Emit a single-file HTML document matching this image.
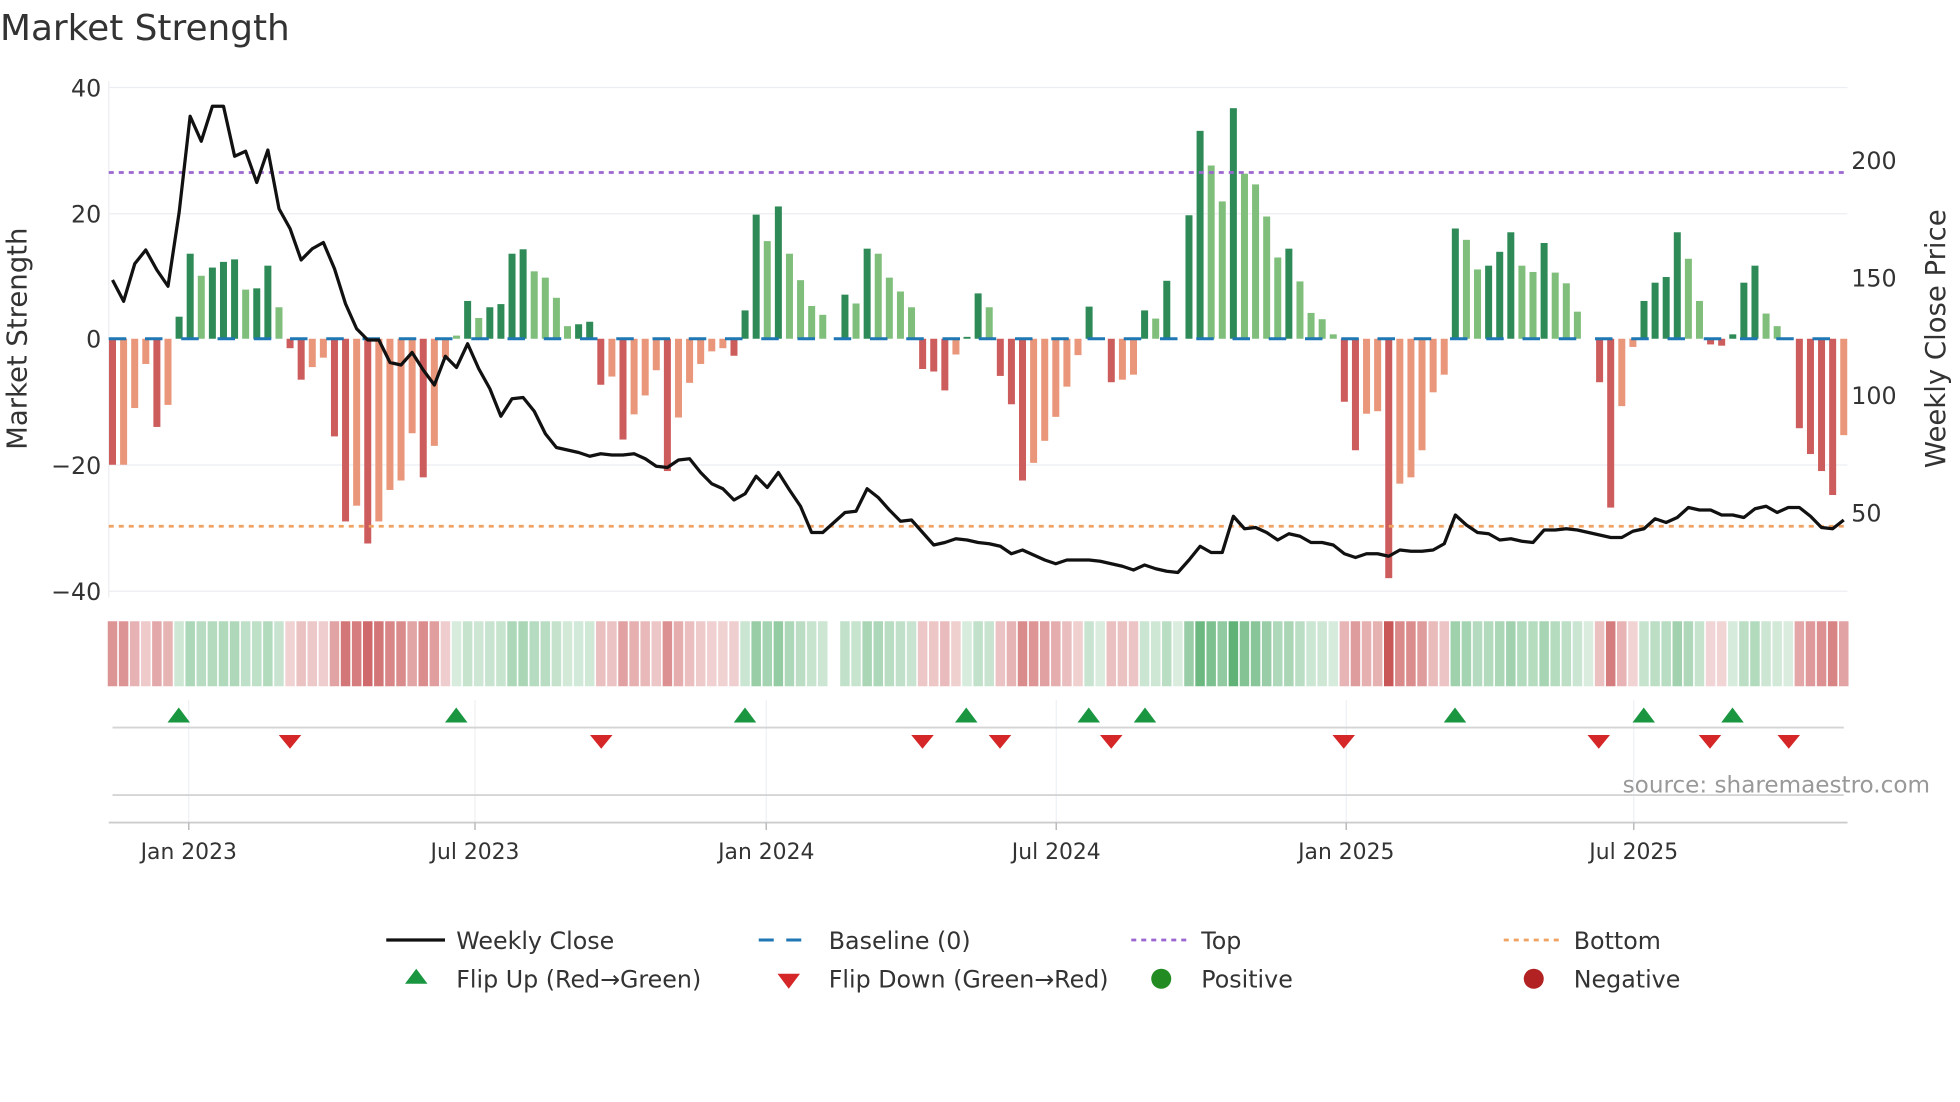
<!DOCTYPE html>
<html><head><meta charset="utf-8"><style>
html,body{margin:0;padding:0;background:#fff;width:1960px;height:1102px;overflow:hidden}
svg{display:block}
text{font-family:"DejaVu Sans","Liberation Sans",sans-serif;fill:#333}
</style></head><body>
<svg id="s" width="1960" height="1102" viewBox="0 0 1568 881.6" xmlns="http://www.w3.org/2000/svg">
<text x="0" y="32" font-size="28.7" fill="#333">Market Strength</text>
<g stroke="#eceef2" stroke-width="1">
<line x1="87" y1="70" x2="1478" y2="70"/><line x1="87" y1="171" x2="1478" y2="171"/>
<line x1="87" y1="372" x2="1478" y2="372"/><line x1="87" y1="473" x2="1478" y2="473"/>
<line x1="87" y1="65" x2="87" y2="478"/>
</g>
<g font-size="19" text-anchor="end">
<text x="81" y="77">40</text><text x="81" y="178">20</text><text x="81" y="278">0</text>
<text x="81" y="379">−20</text><text x="81" y="480">−40</text>
</g>
<g font-size="19">
<text x="1481" y="135">200</text><text x="1481" y="229">150</text><text x="1481" y="323">100</text><text x="1481" y="417">50</text>
</g>
<text transform="translate(21,271) rotate(-90)" font-size="22" text-anchor="middle">Market Strength</text>
<text transform="translate(1556,271) rotate(-90)" font-size="22" text-anchor="middle">Weekly Close Price</text>
<g id="bars"></g>
<line x1="87" y1="271" x2="1478" y2="271" stroke="#1f77b4" stroke-width="2.4" stroke-dasharray="14 15"/>
<line x1="87" y1="138" x2="1478" y2="138" stroke="#9b66d0" stroke-width="2.2" stroke-dasharray="4 4"/>
<line x1="87" y1="421" x2="1478" y2="421" stroke="#f0a262" stroke-width="2.2" stroke-dasharray="4 4"/>
<polyline id="price" fill="none" stroke="#111" stroke-width="2.6" stroke-linejoin="round"/>
<g id="strip"></g>
<g stroke="#edf0f4" stroke-width="1">
<line x1="151" y1="560" x2="151" y2="658"/><line x1="380" y1="560" x2="380" y2="658"/>
<line x1="613" y1="560" x2="613" y2="658"/><line x1="845" y1="560" x2="845" y2="658"/>
<line x1="1077" y1="560" x2="1077" y2="658"/><line x1="1307" y1="560" x2="1307" y2="658"/>
</g>
<line x1="90" y1="582" x2="1475" y2="582" stroke="#d4d4d4" stroke-width="1.5"/>
<line x1="90" y1="636" x2="1475" y2="636" stroke="#d4d4d4" stroke-width="1.5"/>
<line x1="87" y1="658" x2="1478" y2="658" stroke="#ccc" stroke-width="1.5"/>
<g stroke="#bbb" stroke-width="1.2">
<line x1="151" y1="658" x2="151" y2="664"/><line x1="380" y1="658" x2="380" y2="664"/>
<line x1="613" y1="658" x2="613" y2="664"/><line x1="845" y1="658" x2="845" y2="664"/>
<line x1="1077" y1="658" x2="1077" y2="664"/><line x1="1307" y1="658" x2="1307" y2="664"/>
</g>
<g id="flips"></g>
<text x="1544" y="634" font-size="18.5" text-anchor="end" style="fill:#999">source: sharemaestro.com</text>
<g font-size="17.5" text-anchor="middle">
<text x="151" y="687">Jan 2023</text><text x="380" y="687">Jul 2023</text><text x="613" y="687">Jan 2024</text>
<text x="845" y="687">Jul 2024</text><text x="1077" y="687">Jan 2025</text><text x="1307" y="687">Jul 2025</text>
</g>
<g font-size="19">
<line x1="309" y1="752" x2="356" y2="752" stroke="#111" stroke-width="2.6"/>
<text x="365" y="759">Weekly Close</text>
<line x1="607" y1="752" x2="651" y2="752" stroke="#1f77b4" stroke-width="2.4" stroke-dasharray="12 10"/>
<text x="663" y="759">Baseline (0)</text>
<line x1="905" y1="752" x2="949" y2="752" stroke="#9b66d0" stroke-width="2.2" stroke-dasharray="4 4"/>
<text x="961" y="759">Top</text>
<line x1="1203" y1="752" x2="1247" y2="752" stroke="#f0a262" stroke-width="2.2" stroke-dasharray="4 4"/>
<text x="1259" y="759">Bottom</text>
<polygon points="333,775 342,787 324,787" fill="#1a9641"/>
<text x="365" y="790">Flip Up (Red→Green)</text>
<polygon points="622,779 640,779 631,791" fill="#d62728"/>
<text x="663" y="790">Flip Down (Green→Red)</text>
<circle cx="929" cy="783" r="8" fill="#228b22"/>
<text x="961" y="790">Positive</text>
<circle cx="1227" cy="783" r="8" fill="#b22222"/>
<text x="1259" y="790">Negative</text>
</g>
</svg>
<script>
var V=[-20,-20,-11,-4,-14,-10.5,3.5,13.5,10,11.3,12.2,12.6,7.8,8,11.6,5,-1.5,-6.5,-4.5,-3,-15.5,-29,-26.5,-32.5,-29,-24,-22.5,-15,-22,-17,-3,0.5,6,3.3,5,5.5,13.5,14.2,10.7,9.7,6.5,2,2.3,2.7,-7.3,-6,-16,-12,-9,-5,-21,-12.5,-7,-4,-2,-1.5,-2.7,4.5,19.7,15.5,21,13.5,9.3,5.2,3.8,0,7,5.6,14.3,13.5,9.7,7.5,5,-4.8,-5.2,-8.2,-2.5,0.3,7.2,
5,-5.9,-10.4,-22.5,-19.7,-16.2,-12.4,-7.6,-2.6,5.1,0,-6.9,-6.5,-5.7,4.5,3.2,9.2,0,19.6,33,27.5,21.8,36.6,26.2,24.5,19.4,12.9,14.3,9.1,4.1,3.1,0.7,-10,-17.7,-11.9,-11.5,-38,-23,-22,-17.7,-8.5,-5.7,17.5,15.7,11,11.6,13.8,16.9,11.6,10.6,15.2,10.5,8.8,4.3,0,-6.9,-26.8,-10.7,-1.3,6,8.9,9.8,16.9,12.7,6,-0.9,-1.1,0.7,8.9,11.6,4,2,0,-14.2,-18.3,-21,-24.8,-15.3];
var D=[1,0,0,0,1,0,1,1,0,1,1,1,0,1,1,0,1,1,0,0,1,1,0,1,0,0,0,0,1,0,0,0,1,0,1,1,1,1,0,0,0,0,1,1,1,0,1,0,0,0,1,0,0,0,0,0,1,1,1,0,1,0,0,0,0,0,1,0,1,0,0,0,0,1,1,1,0,1,1,
0,1,1,1,0,0,0,0,0,1,0,1,0,0,1,0,1,0,1,1,0,0,1,0,0,0,0,1,0,0,0,0,1,1,0,0,1,0,0,0,0,0,1,0,0,1,1,1,0,0,1,0,0,0,0,1,1,0,0,1,1,1,1,0,0,1,1,1,1,1,0,0,0,1,1,1,1,0];
var ns="http://www.w3.org/2000/svg",X0=90,SP=(1475-90)/(V.length-1);
function el(t,a,p){var e=document.createElementNS(ns,t);for(var k in a)e.setAttribute(k,a[k]);p.appendChild(e);return e;}
var bars=document.getElementById('bars'),strip=document.getElementById('strip');
for(var i=0;i<V.length;i++){var x=X0+i*SP,v=V[i];
 if(v!==0){var y0=271,y1=271-v*5.04,c=v>0?(D[i]?'#2e8b57':'#7fbf7b'):(D[i]?'#cd5c5c':'#e9967a');
 el('rect',{x:x-2.8,y:Math.min(y0,y1),width:5.6,height:Math.abs(y1-y0),fill:c},bars);}
 if(i!==65){var a=0.2+Math.min(Math.abs(v)/38,1)*0.65;
 el('rect',{x:x-3.8,y:497,width:7.6,height:52,fill:v>=0?'#3fa25a':'#c0393b','fill-opacity':a},strip);}
}
var P=[224,241,211,200,216,229,170,93,113,85,85,125,121,146,120,167,183,208,199,194,215,243,263,272,272,290,292,282,296,308,285,294,275,295,311,333,319,318,329,347,358,360,362,365,363,364,364,363,367,373,374,368,367,378,387,391,400,395,381,390,378,392,405,426,426,418,410,409,391,398,408,417,416,426,436,434,431,432,434,435,437,443,440,444,448,451,448,448,448,449,451,453,456,452,455,457,458,448,437,442,442,413,423,422,426,432,427,429,434,434,436,443,446,443,443,445,440,441,441,440,435,412,420,426,427,432,431,433,434,424,424,423,424,426,428,430,430,425,423,415,418,414,406,408,408,412,412,414,407,405,410,406,406,413,422,423,416];
var pts=[];for(var j=0;j<P.length;j++)pts.push((X0+j*(1475-90)/(P.length-1)).toFixed(1)+','+P[j]);
document.getElementById('price').setAttribute('points',pts.join(' '));
var fl=document.getElementById('flips');
[143,365,596,773,871,916,1164,1315,1386].forEach(function(x){el('polygon',{points:x+',566 '+(x+9)+',578 '+(x-9)+',578',fill:'#1a9641'},fl);});
[232,481,738,800,889,1075,1279,1368,1431].forEach(function(x){el('polygon',{points:(x-9)+',588 '+(x+9)+',588 '+x+',599',fill:'#d62728'},fl);});
</script>
</body></html>
